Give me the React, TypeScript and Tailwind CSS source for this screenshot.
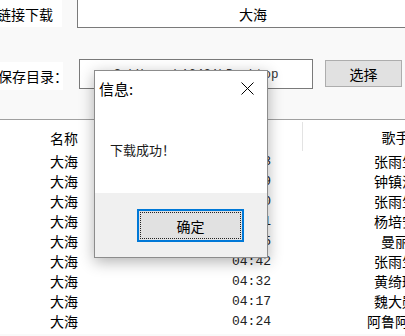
import { useState } from "react";

const rows = [
	{ name: "大海", time: "04:33", singer: "张雨生" },
	{ name: "大海", time: "05:09", singer: "钟镇涛" },
	{ name: "大海", time: "04:30", singer: "张雨生" },
	{ name: "大海", time: "04:51", singer: "杨培安" },
	{ name: "大海", time: "03:45", singer: "曼丽" },
	{ name: "大海", time: "04:42", singer: "张雨生" },
	{ name: "大海", time: "04:32", singer: "黄绮珊" },
	{ name: "大海", time: "04:17", singer: "魏大勋" },
	{ name: "大海", time: "04:24", singer: "阿鲁阿卓" },
];

export default function App() {
	const [open, setOpen] = useState(true);

	return (
		<div className="relative h-[336px] w-[405px] overflow-hidden bg-[#f9f9f9] font-['Noto_Sans_CJK_SC',sans-serif] text-black">
			{/* Form */}
			<div className="h-[121px]">
				<div className="-mt-[2px] flex h-[30px]">
					<div className="mt-[2px] flex h-[27px] w-[62px] shrink-0 items-center bg-white">
						<span className="-ml-[3px] whitespace-nowrap text-[14px] leading-none">链接下载</span>
					</div>
					<div className="ml-[15px] flex h-[30px] w-[352px] shrink-0 items-center justify-center border border-[#7a7a7a] bg-white pt-[2px] text-[14px] leading-none">
						大海
					</div>
				</div>

				<div className="mt-[31px] flex h-[31px]">
					<div className="mt-[3px] flex h-[28px] w-[63px] shrink-0 items-center bg-white">
						<span className="-ml-[2px] whitespace-nowrap text-[14px] leading-none">保存目录：</span>
					</div>
					<div className="ml-[16px] flex h-[30px] w-[234px] shrink-0 items-center justify-center border border-[#7a7a7a] bg-white pt-[2px] font-['Liberation_Mono',monospace] text-[12.5px] leading-none text-[#333]">
						C:\Users\16431\Desktop
					</div>
					<button className="ml-[12px] mt-[1px] flex h-[27px] w-[77px] shrink-0 items-center justify-center border border-[#adadad] bg-[#e1e1e1] text-[14px] leading-none">
						选择
					</button>
				</div>
			</div>

			{/* Song list */}
			<div className="h-[215px] border-t border-[#a0a0a0] bg-white">
				<div className="grid h-[31px] grid-cols-[200px_102px_186px] pt-[4px] text-[14px] leading-none">
					<div className="flex items-center pl-[50px]">名称</div>
					<div />
					<div className="-mt-[2px] flex items-center justify-center border-l border-[#e3e3e3]">歌手</div>
				</div>
				{rows.map((r, i) => (
					<div key={i} className="grid h-[20px] grid-cols-[200px_102px_186px] text-[14px] leading-none">
						<div className="flex items-center pl-[50px]">{r.name}</div>
						<div className="flex items-center justify-end pr-[31px] font-['Liberation_Mono',monospace] text-[13px] text-[#222]">
							{r.time}
						</div>
						<div className="flex items-center justify-center whitespace-nowrap">{r.singer}</div>
					</div>
				))}
			</div>

			{/* Message box */}
			{open && (
				<div className="absolute left-[94px] top-[70px] flex h-[188px] w-[174px] flex-col border border-[#8c8c8c] bg-white shadow-[0_4px_14px_rgba(0,0,0,0.3)]">
					<div className="flex h-[34px] shrink-0 items-center justify-between pl-[4px] pr-[13px]">
						<span className="text-[15px] leading-none">信息:</span>
						<button onClick={() => setOpen(false)} className="flex h-[14px] w-[14px] items-center justify-center">
							<svg width="13" height="13" viewBox="0 0 13 13" fill="none" stroke="black" strokeWidth="1">
								<path d="M0.5 0.5L12.5 12.5M12.5 0.5L0.5 12.5" />
							</svg>
						</button>
					</div>
					<div className="flex h-[88px] shrink-0 items-start pl-[15px] pt-[38px] text-[13px] leading-none text-[#1a1a1a]">
						下载成功！
					</div>
					<div className="flex-1 bg-[#f0f0f0] pl-[42px] pt-[16px]">
						<button
							onClick={() => setOpen(false)}
							className="relative flex h-[33px] w-[107px] items-center justify-center border-2 border-[#0078d7] bg-[#e1e1e1] text-[14px] leading-none"
						>
							<span className="absolute inset-[1px] border border-dotted border-[#222]" />
							确定
						</button>
					</div>
				</div>
			)}
		</div>
	);
}
